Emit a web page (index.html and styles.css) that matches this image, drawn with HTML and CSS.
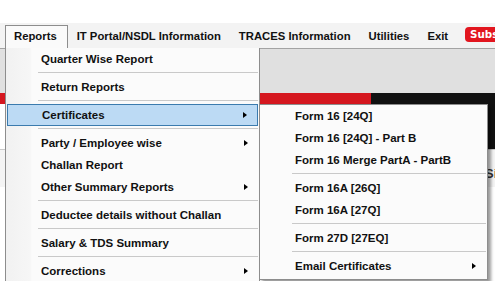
FILE: index.html
```html
<!DOCTYPE html>
<html lang="en">
  <head>
    <meta charset="UTF-8" />
    <title>Reports Menu</title>
    <link rel="stylesheet" href="styles.css">
  </head>
  <body>
    <div class="top"></div>
    <nav class="menubar">
      <span class="mb-item open">Reports</span>
      <span class="mb-item">IT Portal/NSDL Information</span>
      <span class="mb-item">TRACES Information</span>
      <span class="mb-item">Utilities</span>
      <span class="mb-item">Exit</span>
      <span class="badge">Subscribe</span>
    </nav>

    <div class="workspace">
      <div class="side-strip">
        <div class="seg gray" style="height: 17px"></div>
        <div class="seg red" style="height: 73px"></div>
        <div class="seg" style="height: 35px"></div>
        <div class="seg red" style="height: 12px"></div>
        <div class="seg" style="height: 33px"></div>
        <div class="seg red" style="height: 13px"></div>
        <div class="seg" style="height: 34px"></div>
        <div class="seg red" style="height: 14px"></div>
      </div>

      <div class="main">
        <div class="band-gray"></div>
        <div class="banner">
          <div class="banner-red"></div>
          <div class="banner-black">
            <svg class="logo" width="8" height="56" viewBox="0 0 8 56">
              <polygon points="0,14 3,14 8,34 8,42 5,42 0,22" fill="#fff" />
            </svg>
          </div>
        </div>
        <div class="lower">
          <div class="lower-text"><span>Sign</span></div>
          <div class="lower-rest">
            <div class="scroll"></div>
          </div>
        </div>
      </div>

      <!-- Reports dropdown -->
      <ul class="dropdown">
        <li class="item">Quarter Wise Report</li>
        <li class="sep"></li>
        <li class="item">Return Reports</li>
        <li class="sep"></li>
        <li class="item active">Certificates<span class="arrow"></span></li>
        <li class="sep"></li>
        <li class="item">Party / Employee wise<span class="arrow"></span></li>
        <li class="item">Challan Report</li>
        <li class="item">Other Summary Reports<span class="arrow"></span></li>
        <li class="sep"></li>
        <li class="item">Deductee details without Challan</li>
        <li class="sep"></li>
        <li class="item">Salary &amp; TDS Summary</li>
        <li class="sep"></li>
        <li class="item">Corrections<span class="arrow"></span></li>
      </ul>

      <!-- Certificates submenu -->
      <ul class="submenu">
        <li class="item">Form 16 [24Q]</li>
        <li class="item">Form 16 [24Q] - Part B</li>
        <li class="item">Form 16 Merge PartA - PartB</li>
        <li class="sep"></li>
        <li class="item">Form 16A [26Q]</li>
        <li class="item">Form 16A [27Q]</li>
        <li class="sep"></li>
        <li class="item">Form 27D [27EQ]</li>
        <li class="sep"></li>
        <li class="item">Email Certificates<span class="arrow"></span></li>
      </ul>
    </div>
  </body>
</html>
```

FILE: styles.css
```css
html,
body {
  margin: 0;
  padding: 0;
  overflow: hidden;
}
body {
  font-family: "Liberation Sans", Arial, sans-serif;
  font-size: 11.5px;
  font-weight: bold;
  color: #111;
  background-color: #fff;
  width: 495px;
  height: 281px;
}
.top {
  height: 23px;
  background-color: #fff;
}
.menubar {
  display: flex;
  align-items: flex-start;
  height: 25px;
  padding-left: 5px;
  background-color: #f3f3f3;
  border-bottom: 1px solid #a3a3a3;
  white-space: nowrap;
  overflow: hidden;
  position: relative;
  z-index: 2;
}
.mb-item {
  flex-shrink: 0;
  height: 23px;
  line-height: 21px;
  margin-top: 2px;
  padding: 0 8px 0 8px;
  border: 1px solid transparent;
  border-bottom: none;
  font-size: 11.3px;
}
.mb-item.open {
  background-color: #fafafa;
  border-color: #8d8d8d;
  height: 24px;
  margin-bottom: -1px;
  padding-right: 10px;
}
.badge {
  flex-shrink: 0;
  margin: 4px 0 0 8px;
  height: 15px;
  line-height: 15px;
  padding: 0 6px 0 5px;
  border-radius: 4px;
  background-color: #e2161f;
  color: #fff;
  font-family: "DejaVu Sans", Verdana, sans-serif;
  font-size: 10.3px;
}

.workspace {
  position: relative;
  display: flex;
  height: 232px;
}
.side-strip {
  width: 5px;
  display: flex;
  flex-direction: column;
}
.seg {
  background-color: #fff;
}
.seg.gray {
  background-color: #e0e0e0;
}
.seg.red {
  background-color: #8a0b0f;
}
.main {
  flex: 1;
  display: flex;
  flex-direction: column;
}
.band-gray {
  height: 44px;
  background-color: #e0e0e0;
}
.banner {
  display: flex;
  align-items: flex-start;
  height: 56px;
}
.banner-red {
  width: 371px;
  height: 11px;
  background-color: #d5171f;
}
.banner-black {
  flex: 1;
  height: 56px;
  background-color: #111;
  display: flex;
  justify-content: flex-end;
}
.lower {
  flex: 1;
  display: flex;
  flex-direction: column;
  background-color: #fff;
}
.lower-text {
  overflow: hidden;
  white-space: nowrap;
  background-color: #f4f4f4;
  border-top: 1px solid #c9c9c9;
  height: 38px;
  padding-left: 485px;
  box-sizing: border-box;
  font-size: 13px;
  line-height: 48px;
  color: #333;
}
.lower-rest {
  flex: 1;
  display: flex;
  justify-content: flex-end;
}
.scroll {
  width: 5px;
  background-color: #e4e4e4;
  border-left: 1px solid #b5b5b5;
}

/* dropdown menus */
.dropdown,
.submenu {
  list-style: none;
  margin: 0;
  padding: 0;
  position: absolute;
  z-index: 3;
}
.dropdown {
  left: 5px;
  top: -1px;
  width: 253px;
  height: 240px;
  border: 1px solid #8d8d8d;
  border-top: none;
  background: linear-gradient(to right, #f1f1f1 0, #f6f6f6 24px, #fbfbfb 26px);
}
.submenu {
  left: 259px;
  top: 55px;
  width: 227px;
  padding-bottom: 2px;
  border: 1px solid #8d8d8d;
  background-color: #fbfbfb;
  box-shadow: 3px 3px 3px rgba(0, 0, 0, 0.4);
}
.item {
  position: relative;
  height: 22px;
  line-height: 22px;
  padding-left: 35px;
  box-sizing: border-box;
  white-space: nowrap;
}
.item.active {
  margin: 0 1px;
  padding-left: 34px;
  line-height: 20px;
  background-color: #bcdaf4;
  border: 1px solid #3b7bae;
}
.sep {
  height: 1px;
  margin: 2px 1px 3px 32px;
  background-color: #c9c9c9;
}
.arrow {
  position: absolute;
  right: 11px;
  top: 8px;
  width: 0;
  height: 0;
  border-left: 4px solid #000;
  border-top: 3.5px solid transparent;
  border-bottom: 3.5px solid transparent;
}
.item.active .arrow {
  right: 10px;
  top: 7px;
}
.submenu .arrow {
  right: 11px;
}
```
